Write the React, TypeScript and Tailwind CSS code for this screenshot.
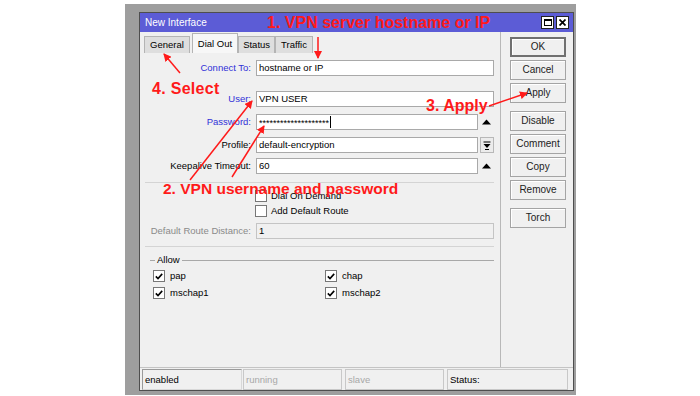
import React from 'react'

const labelCls = 'w-[116px] pr-[5px] text-right leading-none'
const inputCls = 'h-[16px] bg-white border border-[#a9a9a9] pl-[2px] flex items-center leading-none text-black'

function Up() {
  return (
    <div className="w-[16px] flex items-center justify-center">
      <svg width="9" height="6" viewBox="0 0 9 6"><path d="M0 5.5 L4.5 0.5 L9 5.5 Z" fill="#000" /></svg>
    </div>
  )
}

function Check({ on }: { on?: boolean }) {
  return (
    <div className="w-[12px] h-[12px] bg-white border border-[#777] flex items-center justify-center">
      {on && (
        <svg width="8" height="7" viewBox="0 0 8 7">
          <path d="M0.8 3.4 L3 5.6 L7.2 0.9" stroke="#000" strokeWidth="1.6" fill="none" />
        </svg>
      )}
    </div>
  )
}

function Btn({ label, main }: { label: string; main?: boolean }) {
  return (
    <div
      className={
        'w-[56px] h-[20px] flex items-center justify-center leading-none text-[10px] text-[#222] bg-[#f0f0f0] shadow-[inset_1px_1px_0_#fff] ' +
        (main ? 'border-2 border-[#707070]' : 'border border-[#a4a4a4]')
      }
    >
      {label}
    </div>
  )
}

export default function App() {
  return (
    <div className="relative w-[700px] h-[396px] bg-white pt-[4px] pl-[125px] font-['Liberation_Sans',Arial,sans-serif] text-[9.5px] text-black">
      <div className="w-[451px] h-[391px] bg-[#9e9e9e] pl-[14px] pt-[8px] pr-[2px] pb-[4px]">
        <div className="w-full h-full border border-[#4e4e4e] bg-[#f0f0f0] flex flex-col">
          {/* title bar */}
          <div className="h-[19px] bg-[#5c5cd6] flex items-center pl-[5px] pr-[4px]">
            <span className="text-white text-[10px] leading-none">New Interface</span>
            <div className="ml-auto flex gap-[2px]">
              <div className="w-[13px] h-[13px] bg-white border border-[#222] flex items-center justify-center">
                <div className="w-[8px] h-[7px] border border-black border-t-2" />
              </div>
              <div className="w-[13px] h-[13px] bg-white border border-[#222] flex items-center justify-center">
                <svg width="7" height="7" viewBox="0 0 7 7">
                  <path d="M0.5 0.5 L6.5 6.5 M6.5 0.5 L0.5 6.5" stroke="#000" strokeWidth="1.7" />
                </svg>
              </div>
            </div>
          </div>

          <div className="flex-1 flex">
            {/* left content */}
            <div className="w-[361px] border-r border-[#b8b8b8] flex flex-col">
              <div className="h-[21px] pt-[1px] pl-[4px] flex items-end">
                <div className="h-[17px] px-[5px] flex items-center bg-[#dedede] border border-[#b4b4b4] border-b-0 leading-none">General</div>
                <div className="h-[20px] ml-[2px] px-[5px] flex items-center bg-[#f7f7f7] border border-[#b4b4b4] border-b-0 leading-none">Dial Out</div>
                <div className="h-[17px] px-[4px] flex items-center bg-[#dedede] border border-[#b4b4b4] border-b-0 leading-none">Status</div>
                <div className="h-[17px] px-[5px] flex items-center bg-[#dedede] border border-[#b4b4b4] border-b-0 leading-none">Traffic</div>
              </div>

              <div className="mt-[7px] flex items-center">
                <div className={labelCls + ' text-[#3030d8]'}>Connect To:</div>
                <div className={inputCls + ' w-[238px]'}>hostname or IP</div>
              </div>
              <div className="mt-[15px] flex items-center">
                <div className={labelCls + ' text-[#3030d8]'}>User:</div>
                <div className={inputCls + ' w-[238px]'}>VPN USER</div>
              </div>
              <div className="mt-[7px] flex items-center">
                <div className={labelCls + ' text-[#3030d8]'}>Password:</div>
                <div className={inputCls + ' w-[222px]'}>
                  <span className="text-[9px] pt-[2px]">********************</span>
                  <div className="w-[1px] h-[12px] bg-black ml-[1px]" />
                </div>
                <Up />
              </div>
              <div className="mt-[7px] flex items-center">
                <div className={labelCls}>Profile:</div>
                <div className={inputCls + ' w-[222px]'}>default-encryption</div>
                <div className="w-[14px] h-[16px] ml-[2px] border border-[#b8b8b8] bg-[#ececec] flex items-center justify-center">
                  <svg width="8" height="9" viewBox="0 0 8 9">
                    <path d="M0.5 1 H7.5" stroke="#000" strokeWidth="1" />
                    <path d="M0.5 3 L7.5 3 L4 7 Z" fill="#000" />
                    <path d="M2 8.5 H6" stroke="#000" strokeWidth="1" />
                  </svg>
                </div>
              </div>
              <div className="mt-[5px] flex items-center">
                <div className={labelCls}>Keepalive Timeout:</div>
                <div className={inputCls + ' w-[222px]'}>60</div>
                <Up />
              </div>

              <div className="mt-[8px] ml-[5px] mr-[6px] border-t border-[#d4d4d4]" />

              <div className="mt-[7px] ml-[115px] flex items-center gap-[4px]">
                <Check />
                <span className="leading-none">Dial On Demand</span>
              </div>
              <div className="mt-[3px] ml-[115px] flex items-center gap-[4px]">
                <Check />
                <span className="leading-none">Add Default Route</span>
              </div>

              <div className="mt-[6px] flex items-center">
                <div className={labelCls + ' text-[#8a8a8a]'}>Default Route Distance:</div>
                <div className="w-[238px] h-[16px] border border-[#c4c4c4] bg-[#f0f0f0] pl-[2px] flex items-center leading-none">1</div>
              </div>

              <div className="mt-[7px] ml-[5px] mr-[6px] border-t border-[#d4d4d4]" />

              <div className="mt-[7px] ml-[10px] mr-[6px] h-[12px] flex items-center">
                <div className="w-[5px] border-t border-[#a8a8a8]" />
                <span className="px-[2px] leading-none">Allow</span>
                <div className="flex-1 border-t border-[#a8a8a8]" />
              </div>

              <div className="mt-[4px] ml-[13px] flex items-center">
                <div className="w-[172px] flex items-center gap-[5px]">
                  <Check on />
                  <span className="leading-none">pap</span>
                </div>
                <div className="flex items-center gap-[5px]">
                  <Check on />
                  <span className="leading-none">chap</span>
                </div>
              </div>
              <div className="mt-[5px] ml-[13px] flex items-center">
                <div className="w-[172px] flex items-center gap-[5px]">
                  <Check on />
                  <span className="leading-none">mschap1</span>
                </div>
                <div className="flex items-center gap-[5px]">
                  <Check on />
                  <span className="leading-none">mschap2</span>
                </div>
              </div>
            </div>

            {/* right buttons */}
            <div className="flex-1 pl-[9px] pt-[5px] flex flex-col">
              <div className="flex flex-col gap-[3px]">
                <Btn label="OK" main />
                <Btn label="Cancel" />
                <Btn label="Apply" />
              </div>
              <div className="mt-[8px] flex flex-col gap-[3px]">
                <Btn label="Disable" />
                <Btn label="Comment" />
                <Btn label="Copy" />
                <Btn label="Remove" />
              </div>
              <div className="mt-[8px]">
                <Btn label="Torch" />
              </div>
            </div>
          </div>

          {/* status bar */}
          <div className="h-[23px] border-t border-[#c4c4c4] pt-[1px] pl-[2px] flex">
            <div className="w-[100px] h-[21px] border border-[#9a9a9a] border-r-[#d8d8d8] border-b-[#d8d8d8] pl-[2px] flex items-center leading-none">enabled</div>
            <div className="w-[99px] ml-[1px] h-[21px] border border-[#c8c8c8] pl-[2px] flex items-center leading-none text-[#a8a8a8]">running</div>
            <div className="w-[99px] ml-[3px] h-[21px] border border-[#c8c8c8] pl-[2px] flex items-center leading-none text-[#a8a8a8]">slave</div>
            <div className="w-[121px] ml-[3px] h-[21px] border border-[#c8c8c8] pl-[2px] flex items-center leading-none">Status:</div>
          </div>
        </div>
      </div>

      {/* annotations */}
      <div className="absolute left-[267px] top-[15px] text-[16px] font-bold leading-none text-[#ff1a1a]">1. VPN server hostname or IP</div>
      <div className="absolute left-[152px] top-[81px] text-[16px] font-bold leading-none text-[#ff1a1a] tracking-[0.3px]">4. Select</div>
      <div className="absolute left-[426px] top-[98px] text-[16px] font-bold leading-none text-[#ff1a1a]">3. Apply</div>
      <div className="absolute left-[163px] top-[181px] text-[15.5px] font-bold leading-none text-[#ff1a1a]">2. VPN username and password</div>

      <svg className="absolute left-0 top-0 pointer-events-none" width="700" height="396">
        <defs>
          <marker id="ah" markerWidth="8" markerHeight="8" refX="7" refY="4" orient="auto" markerUnits="userSpaceOnUse">
            <path d="M0 0 L8 4 L0 8 Z" fill="#ff1a1a" />
          </marker>
        </defs>
        <g stroke="#ff1a1a" strokeWidth="1.5" fill="none">
          <line x1="318" y1="37" x2="318" y2="58" markerEnd="url(#ah)" />
          <line x1="180" y1="73" x2="164" y2="54" markerEnd="url(#ah)" />
          <line x1="489" y1="106" x2="527" y2="93" markerEnd="url(#ah)" />
          <line x1="190" y1="180" x2="252" y2="101" markerEnd="url(#ah)" />
          <line x1="232" y1="177" x2="264" y2="126" markerEnd="url(#ah)" />
        </g>
      </svg>
    </div>
  )
}
